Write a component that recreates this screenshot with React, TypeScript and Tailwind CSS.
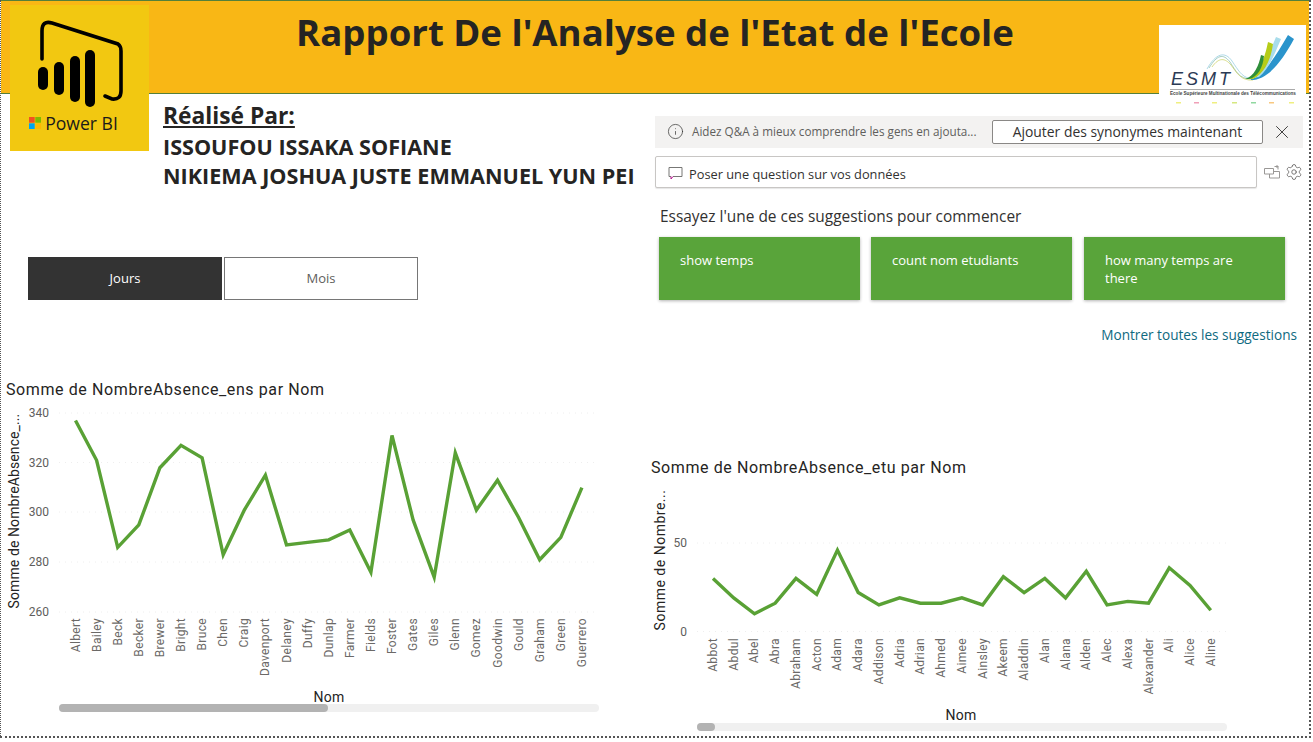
import React from "react";
import { Info, X, Settings } from "lucide-react";

const ensNames = ["Albert","Bailey","Beck","Becker","Brewer","Bright","Bruce","Chen","Craig","Davenport","Delaney","Duffy","Dunlap","Farmer","Fields","Foster","Gates","Giles","Glenn","Gomez","Goodwin","Gould","Graham","Green","Guerrero"];
const ensData = [337,321,286,295,318,327,322,283,301,315,287,288,289,293,276,331,297,274,324,301,313,298,281,290,310];
const etuNames = ["Abbot","Abdul","Abel","Abra","Abraham","Acton","Adam","Adara","Addison","Adria","Adrian","Ahmed","Aimee","Ainsley","Akeem","Aladdin","Alan","Alana","Alden","Alec","Alexa","Alexander","Ali","Alice","Aline"];
const etuData = [30,19,10,16,30,21,46,22,15,19,16,16,19,15,31,22,30,19,34,15,17,16,36,26,12];

type ChartProps = {
  width: number;
  height: number;
  names: string[];
  data: number[];
  ticks: { value: number; y: number }[];
  x0: number;
  step: number;
  gridX: [number, number];
  tickX: number;
  labelTop: number;
  axisTitle: string;
  axisTitleX: number;
  axisTitleY: number;
  axisSpacing: number;
  nomX: number;
  nomY: number;
};

const LineChart = (p: ChartProps) => {
  const [a, b] = [p.ticks[0], p.ticks[p.ticks.length - 1]];
  const scale = (b.y - a.y) / (b.value - a.value);
  const points = p.data.map((v, i) => `${p.x0 + i * p.step},${a.y + (v - a.value) * scale}`).join(" ");
  return (
    <svg width={p.width} height={p.height} className="block overflow-visible" fontFamily="Roboto, sans-serif">
      {p.ticks.map((t) => (
        <g key={t.value}>
          <line x1={p.gridX[0]} x2={p.gridX[1]} y1={t.y} y2={t.y} stroke="#eeeeee" strokeDasharray="1 5" />
          <text x={p.tickX} y={t.y + 4} textAnchor="end" fontSize="12" fill="#605E5C">{t.value}</text>
        </g>
      ))}
      <polyline points={points} fill="none" stroke="#59A135" strokeWidth="3.4" strokeLinejoin="miter" />
      {p.names.map((n, i) => (
        <text key={n} transform={`translate(${p.x0 + i * p.step + 4},${p.labelTop}) rotate(-90)`} textAnchor="end" fontSize="12" letterSpacing="0.35" fill="#6B6967">{n}</text>
      ))}
      <text transform={`translate(${p.axisTitleX},${p.axisTitleY}) rotate(-90)`} textAnchor="middle" fontSize="14" letterSpacing={p.axisSpacing} fill="#252423">{p.axisTitle}</text>
      <text x={p.nomX} y={p.nomY} textAnchor="middle" fontSize="14" letterSpacing="0.3" fill="#252423">Nom</text>
    </svg>
  );
};

const PowerBiLogo = () => (
  <div className="absolute left-[9px] top-[5px] w-[139px] h-[146px] bg-[#F2C811] flex flex-col items-center">
    <svg width="139" height="108" viewBox="0 0 139 108" className="block">
      <path d="M32 54V26Q32 15 42 18L108 39Q111 41 111 46V86Q111 95 102 94L95 91" fill="none" stroke="#000" strokeWidth="3.6" strokeLinecap="round" />
      <rect x="28" y="62" width="10" height="23" rx="5" />
      <rect x="44" y="57" width="10" height="33" rx="5" />
      <rect x="60" y="51" width="10" height="46" rx="5" />
      <rect x="75" y="45" width="10" height="57" rx="5" />
    </svg>
    <div className="flex items-center gap-[4px] pr-[12px]">
      <svg width="12" height="12" viewBox="0 0 12 12">
        <rect width="5.7" height="5.7" fill="#F25022" />
        <rect x="6.3" width="5.7" height="5.7" fill="#7FBA00" />
        <rect y="6.3" width="5.7" height="5.7" fill="#00A4EF" />
        <rect x="6.3" y="6.3" width="5.7" height="5.7" fill="#FFB900" />
      </svg>
      <span className="font-['Open_Sans',sans-serif] text-[17.6px] leading-[20px] text-[#1a1a1a]">Power BI</span>
    </div>
  </div>
);

const EsmtLogo = () => (
  <div className="absolute left-[1158px] top-[25px] w-[147px] h-[80px] bg-white overflow-hidden">
    <svg width="147" height="80" viewBox="0 0 147 80" className="block">
      <path d="M50 43C58 30 64 28 71 37C77 46 80 54 92 54" fill="none" stroke="#7FB8A8" strokeWidth="0.7" />
      <path d="M53 42C60 32 66 33 72 40C78 48 82 56 94 55" fill="none" stroke="#C9CF5A" strokeWidth="0.7" />
      <path d="M48 44C57 28 66 26 73 36C79 45 83 52 90 53" fill="none" stroke="#8CC8E0" strokeWidth="0.7" />
      <path d="M92 54C104 52 116 32 129 10L135 14C124 34 110 55 92 55Z" fill="#2A94CC" />
      <path d="M94 53C104 48 110 28 117 12L122 14C116 28 110 44 100 52Z" fill="#A8DCEB" />
      <path d="M90 54C100 50 106 32 109 17L114 19C112 34 106 48 94 54Z" fill="#B5CC18" />
      <path d="M86 54C95 52 100 40 102 30L105 31C104 42 99 52 90 54Z" fill="#2F8F3A" />
      {[["17","#EFEF80"],["35","#F0A0B8"],["53","#EFEF80"],["73","#D5E880"],["92","#90D8A0"],["110","#F8C880"],["130","#EFEF80"]].map(([x, c]) => (
        <rect key={x} x={x} y="77" width="5" height="1.5" fill={c} />
      ))}
    </svg>
    <div className="absolute left-[12px] top-[44px] font-['Liberation_Sans',sans-serif] italic text-[18px] leading-[20px] tracking-[3px] text-[#2b3a55]">ESMT</div>
    <div className="absolute left-[11px] top-[64px] w-[125px] border-t border-[#aaa] pt-[1px] font-['Liberation_Sans',sans-serif] font-bold text-[4.6px] leading-[6px] whitespace-nowrap text-[#444]">Ecole Supérieure Multinationale des Télécommunications</div>
  </div>
);

const SwapIcon = () => (
  <svg width="16" height="14" viewBox="0 0 16 14" fill="none" stroke="#9A9896" strokeWidth="1">
    <path d="M0.5 3.5H9.5V9H0.5ZM5.5 9V13H15.5V6.5H9.5M10.5 1.5H14V4.5M12.5 0L14 1.5L12.5 3" />
  </svg>
);

const ChatIcon = () => (
  <svg width="15" height="15" viewBox="0 0 15 15" fill="none" strokeWidth="1" className="mt-[3px]">
    <path d="M1 1.5H14V10.5H5" stroke="#777775" />
    <path d="M1 1.5V10.5H3" stroke="#777775" />
    <path d="M3 10.5V13L5 10.5" stroke="#B4188E" />
  </svg>
);

export default function App() {
  const cardClass = "w-[201px] h-[63px] bg-[#59A43A] shadow-[0_1px_3px_rgba(0,0,0,0.3)] px-[21px] pt-[14px] text-white text-[13px] leading-[18px]";
  return (
    <div className="w-[1313px] h-[742px] bg-white overflow-hidden font-['Open_Sans',sans-serif]">
      <div className="relative w-[1311px] h-[738px] border-l border-r-2 border-b-2 border-dotted border-[#555] flex flex-col">
        <header className="h-[94px] shrink-0 bg-[#F9B715] border-t border-b border-[#55803A] flex justify-center">
          <h1 className="text-[36.6px] leading-[62px] font-bold text-[#252423] whitespace-nowrap">Rapport De l'Analyse de l'Etat de l'Ecole</h1>
        </header>
        <PowerBiLogo />
        <EsmtLogo />
        <div className="flex flex-1 min-h-0">
          <section className="w-[653px] shrink-0 flex flex-col">
            <div className="pl-[162px] pt-[7px] text-[#252423] font-bold">
              <div className="text-[22.8px] leading-[30px] underline">Réalisé Par:</div>
              <div className="text-[21.6px] leading-[29px] mt-[1px] whitespace-nowrap">ISSOUFOU ISSAKA SOFIANE</div>
              <div className="text-[21.6px] leading-[29px] whitespace-nowrap">NIKIEMA JOSHUA JUSTE EMMANUEL YUN PEI</div>
            </div>
            <div className="flex gap-[2px] ml-[27px] mt-[67px] text-[13px]">
              <div className="w-[194px] h-[43px] bg-[#333333] text-white flex items-center justify-center">Jours</div>
              <div className="w-[194px] h-[43px] bg-white border border-[#767676] text-[#605E5C] flex items-center justify-center">Mois</div>
            </div>
            <h2 className="ml-[5px] mt-[80px] text-[16px] leading-[20px] font-normal tracking-[0.6px] text-[#252423] font-['Roboto',sans-serif] whitespace-nowrap">Somme de NombreAbsence_ens par Nom</h2>
            <LineChart
              width={653}
              height={304}
              names={ensNames}
              data={ensData}
              ticks={[{ value: 340, y: 13 }, { value: 320, y: 62.5 }, { value: 300, y: 112 }, { value: 280, y: 162 }, { value: 260, y: 212 }]}
              x0={74.5}
              step={21.1}
              gridX={[58, 598]}
              tickX={48}
              labelTop={218}
              axisTitle="Somme de NombreAbsence_..."
              axisTitleX={18}
              axisTitleY={111}
              axisSpacing={0.1}
              nomX={328}
              nomY={302}
            />
            <div className="ml-[58px] w-[540px] h-[8px] rounded-full bg-[#F0F0F0]">
              <div className="w-[269px] h-[8px] rounded-full bg-[#B3B3B3]" />
            </div>
          </section>
          <section className="flex-1 flex flex-col pt-[22px] min-w-0">
            <div className="ml-[1px] w-[648px] h-[32px] bg-[#F3F2F1] flex items-center">
              <Info size={17} strokeWidth={1} className="ml-[12px] -mt-[1px] text-[#323130]" />
              <span className="ml-[8px] -mt-[1px] w-[300px] text-[11.7px] text-[#605E5C] whitespace-nowrap">Aidez Q&amp;A à mieux comprendre les gens en ajouta...</span>
              <button className="w-[271px] h-[24px] bg-white border border-[#8A8886] rounded-[2px] text-[13.9px] font-medium text-[#323130]">Ajouter des synonymes maintenant</button>
              <X size={22} strokeWidth={1} className="ml-[8px] text-[#323130]" />
            </div>
            <div className="flex items-center mt-[8px]">
              <div className="ml-[1px] w-[602px] h-[32px] bg-white border border-[#C8C6C4] rounded-[2px] shadow-[0_1px_1px_rgba(0,0,0,0.1)] flex items-center pl-[12px] gap-[6px] text-[12.8px] text-[#323130]">
                <ChatIcon />
                <span className="pt-[5px]">Poser une question sur vos données</span>
              </div>
              <div className="ml-[7px]"><SwapIcon /></div>
              <Settings size={18} strokeWidth={1.1} className="ml-[5px] text-[#605E5C]" />
            </div>
            <div className="ml-[6px] mt-[18px] text-[15.45px] leading-[20px] text-[#323130] whitespace-nowrap">Essayez l'une de ces suggestions pour commencer</div>
            <div className="flex gap-[11px] ml-[5px] mt-[11px]">
              <div className={cardClass}>show temps</div>
              <div className={cardClass}>count nom etudiants</div>
              <div className={`${cardClass} ml-[1px]`}>how many temps are there</div>
            </div>
            <div className="w-[643px] mt-[25px] text-right text-[13.6px] leading-[20px] text-[#0F6A7F]">Montrer toutes les suggestions</div>
            <h2 className="-ml-[3px] mt-[113px] text-[16px] leading-[20px] font-normal tracking-[0.6px] text-[#252423] font-['Roboto',sans-serif] whitespace-nowrap">Somme de NombreAbsence_etu par Nom</h2>
            <LineChart
              width={655}
              height={245}
              names={etuNames}
              data={etuData}
              ticks={[{ value: 50, y: 65 }, { value: 0, y: 153.5 }]}
              x0={59}
              step={20.74}
              gridX={[43, 573]}
              tickX={33}
              labelTop={160}
              axisTitle="Somme de Nombre..."
              axisTitleX={11}
              axisTitleY={82}
              axisSpacing={0.5}
              nomX={307}
              nomY={242}
            />
            <div className="ml-[43px] w-[530px] h-[8px] rounded-full bg-[#F0F0F0]">
              <div className="w-[18px] h-[8px] rounded-full bg-[#B3B3B3]" />
            </div>
          </section>
        </div>
      </div>
    </div>
  );
}
